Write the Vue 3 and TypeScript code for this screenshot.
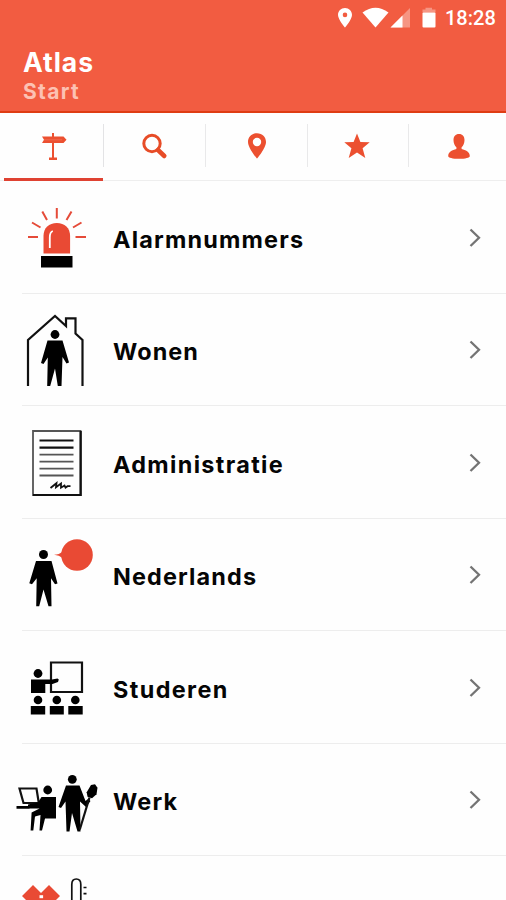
<script setup lang="ts">
interface Topic {
  id: string
  label: string
  viewBox: string
  spacing: string
}

const topics: Topic[] = [
  { id: 'alarm', label: 'Alarmnummers', viewBox: '0 181 113 112', spacing: '1.2px' },
  { id: 'home', label: 'Wonen', viewBox: '0 293.5 113 112', spacing: '1.1px' },
  { id: 'admin', label: 'Administratie', viewBox: '0 406 113 112', spacing: '1.35px' },
  { id: 'dutch', label: 'Nederlands', viewBox: '0 518.5 113 112', spacing: '1.15px' },
  { id: 'study', label: 'Studeren', viewBox: '0 631 113 112', spacing: '1.4px' },
  { id: 'work', label: 'Werk', viewBox: '0 743.5 113 112', spacing: '1.2px' },
  { id: 'health', label: '', viewBox: '0 856 113 112', spacing: '0' },
]
</script>

<template>
  <div class="screen">
    <header class="header">
      <div class="status">
        <svg class="status-icons" viewBox="336 4 104 28">
          <path fill-rule="evenodd" d="M345 8c-4 0-7 3-7 6.900 0 4.500 7 12.600 7 12.600s7-8.100 7-12.600c0-3.900-3-6.900-7-6.900zm0 4.600a2.300 2.300 0 1 1 0 4.600 2.300 2.300 0 0 1 0-4.600z" />
          <path d="M362.500 12.500Q375.500 3 388.500 12.500L375.500 27.500Z" />
          <path class="dim" d="M410 8v19.500h-19.500z" />
          <path d="M402.500 15.500v12h-12z" />
          <path class="dim" d="M422.500 12.500V9.500h3V7.800h6.500v1.700h3.500v3z" />
          <rect x="422.500" y="12.500" width="13" height="15" rx="1" />
        </svg>
        <span class="clock">18:28</span>
      </div>
      <h1 class="title">Atlas</h1>
      <p class="subtitle">Start</p>
    </header>

    <nav class="tabs">
      <button class="tab active" aria-label="Start">
        <svg viewBox="0 0 28 28">
          <path d="M13 1h2v3.500h9.500l3 3.300-3 3.200H15v14.500h3V28h-8v-2.500h3V11H3l2-3.200L3 4.500h10z" />
          <path class="cut" d="M5 7.800h18" />
        </svg>
      </button>
      <button class="tab" aria-label="Zoeken">
        <svg viewBox="0 0 28 28">
          <circle class="line" cx="12" cy="11.500" r="8.200" />
          <path class="handle" d="M18 18l6.300 6" />
        </svg>
      </button>
      <button class="tab" aria-label="Kaart">
        <svg viewBox="0 0 28 28">
          <path fill-rule="evenodd" d="M14 1.300C8.700 1.300 5 5 5 10c0 6.200 9 16.700 9 16.700S23 16.200 23 10c0-5-3.700-8.700-9-8.700zm0 4.500a4.200 4.200 0 1 1 0 8.400 4.200 4.200 0 0 1 0-8.400z" />
        </svg>
      </button>
      <button class="tab" aria-label="Favorieten">
        <svg viewBox="0 0 28 28">
          <path d="M14 1.500l3.400 8.500 9.300.3-7.100 6 2.700 9.600L14 20.600l-8.300 5.300 2.700-9.600-7.100-6 9.300-.3z" />
        </svg>
      </button>
      <button class="tab" aria-label="Profiel">
        <svg viewBox="0 0 28 28">
          <path d="M14 2c-3.600 0-5.500 2.500-5.500 6 0 3 1.200 5.800 2.900 7.200V17c-4 .9-8.200 2.800-8.200 7 0 1.900 4.500 2.800 10.800 2.800S24.800 25.900 24.800 24c0-4.200-4.200-6.100-8.200-7v-1.800c1.700-1.400 2.900-4.200 2.900-7.200 0-3.500-1.900-6-5.500-6z" />
        </svg>
      </button>
    </nav>

    <main class="list">
      <div v-for="topic in topics" :key="topic.id" class="row">
        <svg class="picture" :viewBox="topic.viewBox">
          <g v-if="topic.id === 'alarm'">
            <path class="red" d="M43.500 253.500V236c0-8 5.500-13 13.300-13s13.300 5 13.300 13v17.500z" />
            <path class="shine" d="M49.800 248v-10.500q0-5.500 3-6.500" />
            <path class="ray" d="M28 237h10M32 222.500l8.500 5M42.300 211.500l4.700 8.500M56.800 208v10.500M71.500 211.500l-5 8.500M81.500 222.500l-8.500 5M86 237H75.500" />
            <rect x="41" y="256" width="31.500" height="11.500" />
          </g>
          <g v-else-if="topic.id === 'home'">
            <path class="outline" d="M28 385.500V339.500L55 315.500l11 10V317.800h9.500V333l7 6.500v46" />
            <circle cx="55" cy="334" r="4.400" />
            <path d="M47.500 340h15l6.500 22-2.500 1-4-6.500-1 29H57.800L55 368l-4.800 17.500h-3L47.800 357l-4.300 6.500-2.500-1z" />
          </g>
          <g v-else-if="topic.id === 'admin'">
            <path class="outline thin" d="M33 431h47.500v64H33z" />
            <path class="outline" d="M80.700 431v64H33" />
            <path class="outline" d="M39.500 440.500h34M39.500 447.700h34" />
            <path class="outline thin" d="M39.500 454.700h34M39.500 461.700h34M39.500 468.700h34M39.500 475.500h34" />
            <path class="outline scribble" d="M50.500 488l6-4.800-.5 4 5-3.700v4.200l3.500-2.200 1 2.200 2-1.500h3" />
          </g>
          <g v-else-if="topic.id === 'dutch'">
            <circle cx="43.500" cy="554" r="4.500" />
            <path d="M36 560.500h15.500L57.500 583l-2.500.8-4-6 .5 28h-3L43.500 589l-4.300 16.800h-3l.5-28-4.700 6-2.700-1z" />
            <circle class="red" cx="77" cy="554.500" r="15.800" />
            <path class="red" d="M54 554.200q5 0 9-3.500v7q-4-3.200-9-3.500z" />
          </g>
          <g v-else-if="topic.id === 'study'">
            <path class="outline" d="M51 662.500h31V692H51z" />
            <circle cx="38" cy="673.500" r="4.400" />
            <path d="M31 679.500h21l5.500-1 1.300 1-.8 2.500-5.500 2h-7.200v9H31z" />
            <circle cx="38" cy="700" r="4.300" />
            <circle cx="56.800" cy="700" r="4.300" />
            <circle cx="75.300" cy="700" r="4.300" />
            <path d="M30.800 706h14.400v8.500H30.800zM49.800 706h14v8.500h-14zM68.300 706h14.400v8.500H68.300z" />
          </g>
          <g v-else-if="topic.id === 'work'">
            <path class="outline" d="M19.500 788h17l2.300 14.500H23.500z" />
            <path d="M16.500 805.500h13v2.700h-13zM28 804l10-2 3.500-5.500H56V818H45l-3 12h-2.500l1-15.500-5.500 1.500-1.700 14h-2.700l1-18 8-4H28z" />
            <circle cx="47.700" cy="789.500" r="4.400" />
            <circle cx="72.300" cy="778.800" r="4.400" />
            <path d="M66 785h13.500l6 15.500 2.500-2 2.500 2-4.500 6-6-5.500.5 30h-3L72 812.500l-2.500 18.500h-3l-1-30-4.500 6.500-2.500-1z" />
            <path class="outline" d="M89.500 797L79.800 829" />
            <path d="M91 784.500l4-.8 2.500 3.500-1 6.500-4.500 4-4.500-1.500-.8-4.500z" />
          </g>
          <g v-else>
            <path class="red" d="M22 896l11-11 8 8 8-8 11 11-11 11H33z" />
            <rect class="white" x="39.500" y="895.200" width="3.600" height="3" />
            <path class="outline thermometer" d="M71.800 902v-17.500q0-5.500 4.500-5.500t4.500 5.500V902M83.500 887.500h3M83.500 893.700h3" />
          </g>
        </svg>
        <div class="entry">
          <span class="label" :style="{ letterSpacing: topic.spacing }">{{ topic.label }}</span>
          <svg v-if="topic.label" class="chevron" viewBox="0 0 12 20"><path d="M1.500 1.500L10 9.800 1.500 18" /></svg>
        </div>
      </div>
    </main>
  </div>
</template>

<style>
body {
  margin: 0;
  background: #fff;
}
</style>

<style scoped>
.screen {
  height: 900px;
  overflow: hidden;
  background: #fefefe;
  color: #050505;
  font-family: Inter, "Liberation Sans", sans-serif;
}
.header {
  box-sizing: border-box;
  height: 113px;
  background: #f25c41;
  border-bottom: 2px solid #df3d14;
  color: #fff;
}
.status {
  display: flex;
  justify-content: flex-end;
  height: 28px;
  margin-bottom: 19px;
  padding: 4px 10px 0 0;
  box-sizing: border-box;
}
.status-icons {
  width: 104px;
  height: 28px;
  flex: none;
  fill: #fff;
}
.dim {
  opacity: 0.35;
}
.clock {
  width: 51px;
  margin-left: 5px;
  font: 500 20px/28px Roboto, sans-serif;
  white-space: nowrap;
}
.title,
.subtitle {
  margin: 0;
  padding-left: 23px;
  font-weight: 700;
}
.title {
  font-size: 26.5px;
  line-height: 30px;
  letter-spacing: 0.95px;
}
.subtitle {
  font-size: 21px;
  line-height: 29px;
  letter-spacing: 1.3px;
  color: #fcc1b3;
}
.tabs {
  display: grid;
  grid-template-columns: 104px 102px 102px 101px 97px;
  height: 68px;
  box-sizing: border-box;
  border-bottom: 1px solid #eee;
}
.tab {
  display: flex;
  justify-content: center;
  height: 43px;
  margin: 11px 0 0;
  padding: 8px 2px 0 0;
  box-sizing: border-box;
  border: 0;
  border-right: 1.5px solid #e9e9ea;
  background: none;
}
.tab:nth-child(3) {
  padding-right: 0;
}
.tab:last-child {
  border-right: 0;
  padding: 8px 0 0 3px;
}
.tab.active {
  height: 57px;
  margin: 11px 1px 0 4px;
  border-right: 0;
  border-bottom: 3px solid #df4232;
}
.tab:nth-child(2) {
  margin-left: -1px;
  border-left: 1px solid #e3e3e5;
}
.tab svg {
  width: 28px;
  height: 28px;
  fill: #ec5030;
}
.tab .line,
.tab .handle {
  fill: none;
  stroke: #e74c27;
  stroke-width: 3;
}
.tab .handle {
  stroke-width: 4.5;
  stroke-linecap: round;
}
.tab .cut {
  stroke: #f3765b;
  stroke-width: 0.7;
}
.row {
  display: flex;
  height: 112.5px;
}
.picture {
  width: 113px;
  height: 112px;
  flex: none;
}
.entry {
  display: flex;
  flex: 1;
  align-items: center;
  justify-content: space-between;
  height: 112.5px;
  margin-left: -91px;
  padding: 2px 25px 0 91px;
  box-sizing: border-box;
  border-bottom: 1.5px solid #ededed;
}
.label {
  padding-top: 4px;
  font-size: 23.4px;
  line-height: 30px;
  font-weight: 700;
  white-space: nowrap;
}
.chevron {
  width: 12px;
  height: 20px;
  fill: none;
  stroke: #747474;
  stroke-width: 2.3;
}
.red {
  fill: #e94a34;
}
.white {
  fill: #fff;
}
.ray {
  fill: none;
  stroke: #e54b39;
  stroke-width: 2;
}
.shine {
  fill: none;
  stroke: #fff;
  stroke-width: 1.8;
}
.outline {
  fill: none;
  stroke: #111;
  stroke-width: 2.2;
}
.thin {
  stroke: #555;
  stroke-width: 1.8;
}
.scribble {
  stroke-width: 1.8;
}
.thermometer {
  stroke-width: 1.7;
}
</style>
